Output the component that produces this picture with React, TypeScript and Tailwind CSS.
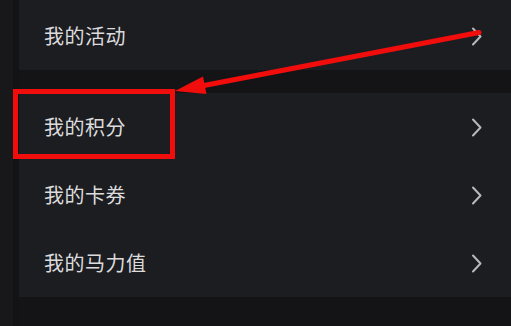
import React from "react";

function Chevron() {
  return (
    <svg width="12" height="19" viewBox="0 0 12 19" className="shrink-0">
      <path d="M2 1.5 L9.5 9.5 L2 17.5" fill="none" stroke="#b9b9bb" strokeWidth="2" strokeLinecap="round" strokeLinejoin="round" />
    </svg>
  );
}

function Row({ label, h = "h-[68px]", extra = "" }: { label: string; h?: string; extra?: string }) {
  return (
    <div className={`flex items-center justify-between pl-[25px] pr-[28px] ${h} ${extra}`}>
      <span className="text-[20px] leading-none text-[#dcdcdd] tracking-[0.5px]">{label}</span>
      <Chevron />
    </div>
  );
}

export default function App() {
  return (
    <div
      className="relative h-[326px] w-[511px] overflow-hidden bg-[#141417] flex"
      style={{ fontFamily: '"Noto Sans CJK SC", "Noto Sans", sans-serif' }}
    >
      <div className="w-[13px] shrink-0 bg-[#18181b]" />
      <div className="w-[6px] shrink-0 bg-[#131315]" />
      <div className="flex-1 flex flex-col">
        <div className="bg-[#1c1d21] h-[70px]">
          <Row label="我的活动" h="h-[70px]" extra="pt-[2px]" />
        </div>
        <div className="h-[23px]" />
        <div className="bg-[#1c1d21] flex flex-col">
          <Row label="我的积分" />
          <Row label="我的卡券" />
          <Row label="我的马力值" />
        </div>
      </div>

      <div className="absolute left-[13px] top-[89px] w-[162px] h-[70px] border-[5px] border-[#f20d0d] pointer-events-none" />
      <svg className="absolute left-0 top-0 pointer-events-none" width="511" height="326" viewBox="0 0 511 326">
        <line x1="204" y1="85.5" x2="479" y2="32.5" stroke="#f20d0d" strokeWidth="5" strokeLinecap="round" />
        <polygon points="175,91 203,76.5 206.5,94" fill="#f20d0d" />
      </svg>
    </div>
  );
}
